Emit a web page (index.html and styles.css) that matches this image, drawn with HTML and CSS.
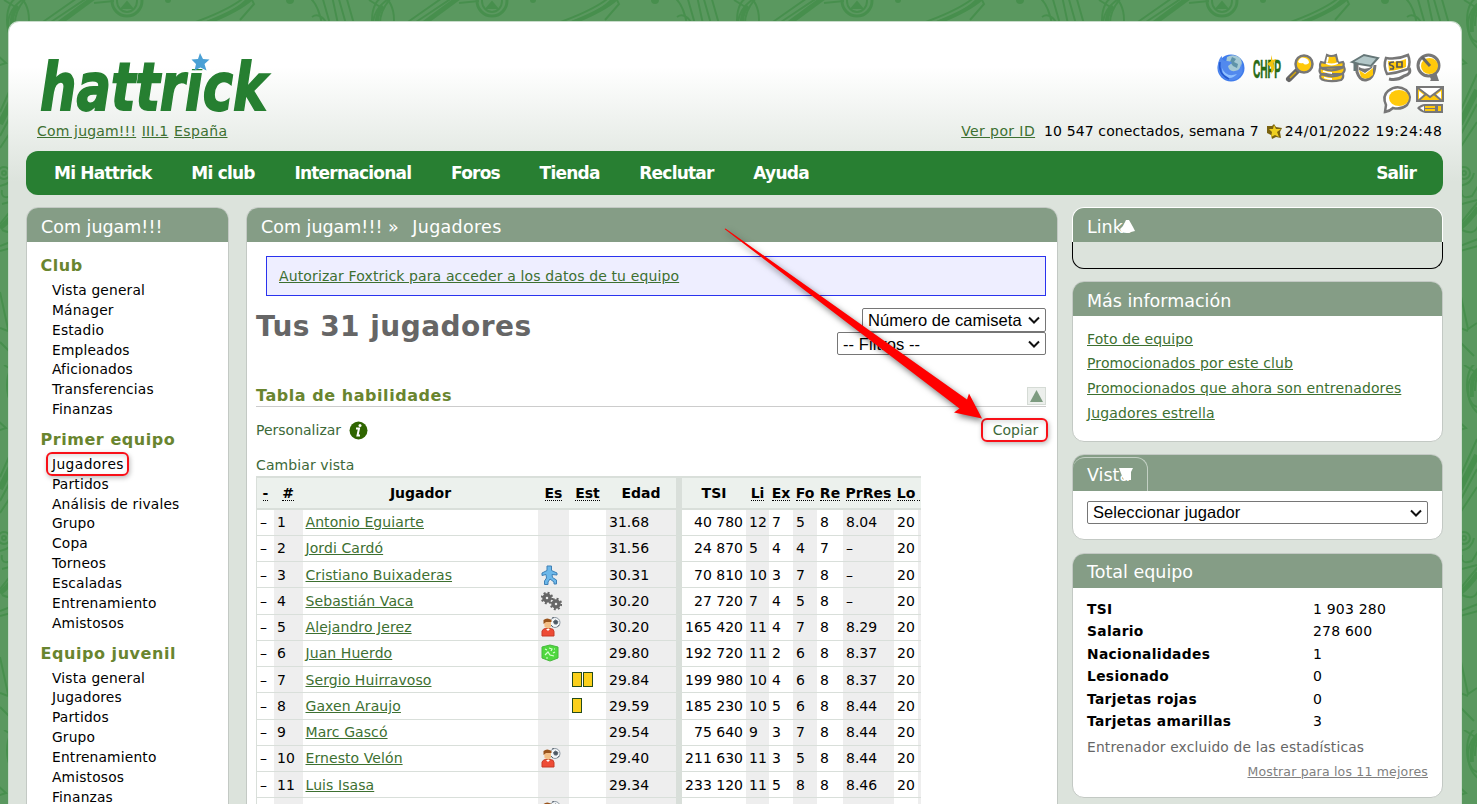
FILE: index.html
```html
<!DOCTYPE html>
<html lang="es">
<head>
<meta charset="utf-8">
<title>Com jugam!!! » Jugadores</title>
<link rel="stylesheet" href="styles.css">
</head>
<body>
<svg class="backdrop" width="1477" height="804" aria-hidden="true">
  <defs>
    <pattern id="doodles" width="365" height="365" patternUnits="userSpaceOnUse">
      <rect width="365" height="365" fill="#5a985f"/>
      <g fill="none" stroke="#478f4d" stroke-width="2">
        <path d="M28-4Q10 6 8 22Q7 40 20 50M28-4Q14 10 15 26M40 24L80-4M48 24L90-4" />
        <path d="M58 24L96-4" stroke-width="5"/>
        <path d="M94 3L114 1"/>
        <ellipse cx="127" cy="1" rx="15" ry="15" stroke-width="3"/>
        <ellipse cx="127" cy="1" rx="10" ry="11"/>
        <path d="M122 8l5-6 5 6z" fill="#478f4d"/>
        <path d="M200 24Q235 14 250-4M190 24Q230 10 246-4M240 20L254 4L250-4M312 17Q319 12 326 22M322-4L330 24M332-4L338 24M338-4L346 24M346-4L354 24M310-2Q318 4 322 24"/>
        <path d="M204 24Q240 10 252-2" stroke-width="4"/>
        <path d="M-4 54L6 63L-3 66M0 112L17 74M0 136L17 104M0 148L17 122"/>
        <path d="M0 124L17 90" stroke-width="6"/>
        <circle cx="4" cy="173" r="6"/><circle cx="4" cy="173" r="2"/>
        <path d="M0 186Q12 184 14 173M2 190Q0 200 12 196L18 186M2 204L17 200M0 224Q8 214 18 202M2 230Q14 236 18 226M0 246L18 239M0 251L18 246M0 292L8 329L17 323M0 328L8 331M17 8L4 0M0 342L14 356"/>
        <path d="M0 228Q10 220 18 208" stroke-width="5"/>
        <ellipse cx="18" cy="20" rx="11" ry="22"/>
        <path d="M18 6Q10 14 12 32" stroke-width="4"/>
      </g>
      <circle cx="168" cy="0" r="3" fill="#478f4d"/>
      <circle cx="290" cy="0" r="4" fill="#478f4d"/>
    </pattern>
  </defs>
  <rect width="1477" height="804" fill="url(#doodles)"/>
</svg>

<div class="page">
  <header class="top">
    <div class="brand">
      <svg class="logo" width="232" height="62" viewBox="0 0 232 62">
        <text class="logo-text" x="2" y="57.500" textLength="227" lengthAdjust="spacingAndGlyphs">hattrick</text>
        <path d="M149 0H178V17H149z" fill="#fff"/>
        <path d="M162 1l3 6 6.500 .5-5 4.500 2 6.500-6-3-6 3 1.500-6.500-4.500-4.500 6.500-.5z" fill="#4aa0d5"/>
      </svg>
      <div class="crumbs"><a href="#">Com jugam!!!</a> <a href="#">III.1</a> <a href="#">España</a></div>
    </div>
    <div class="tools">
      <div class="icons">
        <svg width="28" height="28" viewBox="0 0 28 28"><circle cx="14" cy="14" r="13.500" fill="#3f7cec"/><path d="M10 3Q17-1 23 4Q27 10 23 17Q18 21 12 18Q8 14 9 9z" fill="#a5c9d4"/><path d="M15 3L19 5L17 8L21 10L20 14L16 12L13 8z" fill="#5e93a8"/><path d="M1 10Q2 4 5 2Q4 7 10 7Q14 7 15 9L11 12Q12 18 18 17Q24 16 24 9Q29 18 20 25Q9 29 3 20Q0 15 1 10z" fill="#5289ee"/><path d="M5 14Q9 24 20 20Q14 27 6 22z" fill="#8fc0ff"/><path d="M3 8Q1 20 12 25" fill="none" stroke="#2459d0" stroke-width="1.500"/></svg>
        <svg width="28" height="28" viewBox="0 0 28 28"><text class="chpp" x="0" y="24" textLength="28" lengthAdjust="spacingAndGlyphs">CHPP</text><path d="M18 1l1.500 5 4-1-3 4 1 5-3 6-.5-7-4-3 4-3z" fill="#f2c30d"/></svg>
        <svg width="28" height="28" viewBox="0 0 28 28"><path d="M3 25L11 17" stroke="#666" stroke-width="6" stroke-linecap="round"/><path d="M4 24L10 18" stroke="#d9a90a" stroke-width="1.500"/><circle cx="18" cy="10" r="8.500" fill="#ffc90a" stroke="#777" stroke-width="2.500"/><path d="M12 8Q14 2 19 4Q23 5 23 9Q19 12 17 9Q14 10 12 8z" fill="#fff"/></svg>
        <svg width="28" height="28" viewBox="0 0 28 28"><path d="M3 20Q0 25 7 26.500Q15 28 23 26Q26 24 25 20zM2 14Q0 20 6 21Q16 24 24 20Q28 17 26 13zM3 8Q0 13 5 15Q15 18 24 14Q27 11 25 8L20 9L18 1Q13 3 9 1L7 9z" fill="#ffc90a" stroke="#777" stroke-width="2.200"/><path d="M8 9Q13 12 20 9M10 3l-1 5M5 17Q10 19 14 19M6 23.500Q10 25 14 25" fill="none" stroke="#fff" stroke-width="1.800"/></svg>
        <svg width="28" height="28" viewBox="0 0 28 28"><path d="M6 10V18Q9 27 15 26Q23 25 24 11" fill="#fff" stroke="#777" stroke-width="3"/><path d="M1 8L13 1L27 4L20 12L8 10z" fill="#b3c8c9" stroke="#667778" stroke-width="2"/><path d="M4 9V17" stroke="#667778" stroke-width="3"/><path d="M8 13Q14 17 22 12L21 14L14 19L8 16z" fill="#777"/><path d="M8 16L14 20L22 14V21Q16 27 10 23z" fill="#ffc90a"/></svg>
        <svg width="28" height="28" viewBox="0 0 28 28"><path d="M3 4Q14 6 25 1Q28 8 25 15Q14 19 4 20Q0 12 3 4z" fill="#fff" stroke="#777" stroke-width="2.500"/><path d="M5 7Q14 9 23 5V13Q16 16 6 17z" fill="#ffc90a"/><path d="M11 8Q5 8 7 11Q12 12 10 15H7M19 8h-5v5h5V9z" fill="none" stroke="#555" stroke-width="1.700"/><path d="M26 14Q29 20 21 22Q14 27 6 25" fill="none" stroke="#777" stroke-width="3"/></svg>
        <svg width="28" height="28" viewBox="0 0 28 28"><path d="M20 18L23 27H14Q16 25 13 22z" fill="#777"/><circle cx="12.500" cy="11.500" r="10.500" fill="#fff" stroke="#777" stroke-width="3"/><ellipse cx="13.500" cy="12" rx="8.500" ry="8" fill="#ffc90a"/><path d="M6 3L14 12" stroke="#666" stroke-width="3"/></svg>
        <svg width="28" height="28" viewBox="0 0 28 28"><path d="M2 26L3 19Q-1 10 5 5Q14-2 23 4Q30 11 24 19Q18 24 10 22Q7 25 2 26z" fill="#fff" stroke="#777" stroke-width="2.500"/><ellipse cx="16" cy="12" rx="10" ry="8" fill="#ffc90a"/></svg>
        <svg width="28" height="28" viewBox="0 0 28 28"><rect x="1" y="1" width="26" height="14" fill="#ffc90a" stroke="#777" stroke-width="2"/><path d="M3 2l11 9L25 2zM8 9L3 14V5zM20 9l5 5V5z" fill="#fff"/><path d="M2 2l12 9L26 2M2 15l8-7M26 15l-8-7" fill="none" stroke="#777" stroke-width="2"/><path d="M1 22Q5 18 9 18H27V27H9Q4 26 1 22z" fill="#777"/><path d="M9 20h10v2H9zM9 23h10v2H9zM22 20h3v5h-3z" fill="#ffc90a"/><path d="M4 22l4-2v5z" fill="#fff"/></svg>
      </div>
      <div class="status"><a href="#">Ver por ID</a><span class="online">10 547 conectados, semana 7</span><svg width="17" height="16" viewBox="0 0 17 16"><path d="M1 3h5l2-2 2 3 6 1-2 4 1 6-5-1-4 2-1-4-4-2z" fill="#796210"/><path d="M8 2l2 4h5l-4 3 2 5-4-2-4 2 1-5-3-3h4z" fill="#f0d020"/></svg><span class="clock">24/01/2022 19:24:48</span></div>
    </div>
  </header>

  <nav class="menu">
    <a>Mi Hattrick</a><a>Mi club</a><a>Internacional</a><a>Foros</a><a>Tienda</a><a>Reclutar</a><a>Ayuda</a><a class="exit">Salir</a>
  </nav>

  <div class="columns">
    <aside class="box side">
      <h2 class="box-head">Com jugam!!!</h2>
      <div class="side-body">
        <h3>Club</h3>
        <ul><li>Vista general</li><li>Mánager</li><li>Estadio</li><li>Empleados</li><li>Aficionados</li><li>Transferencias</li><li>Finanzas</li></ul>
        <h3>Primer equipo</h3>
        <ul><li class="current"><span class="marked">Jugadores</span></li><li>Partidos</li><li>Análisis de rivales</li><li>Grupo</li><li>Copa</li><li>Torneos</li><li>Escaladas</li><li>Entrenamiento</li><li>Amistosos</li></ul>
        <h3>Equipo juvenil</h3>
        <ul><li>Vista general</li><li>Jugadores</li><li>Partidos</li><li>Grupo</li><li>Entrenamiento</li><li>Amistosos</li><li>Finanzas</li></ul>
      </div>
    </aside>

    <main class="box main">
      <h2 class="box-head">Com jugam!!! »&nbsp; <span class="here">Jugadores</span></h2>
      <div class="main-body">
        <div class="notice"><a href="#">Autorizar Foxtrick para acceder a los datos de tu equipo</a></div>
        <div class="title-row">
          <h1>Tus 31 jugadores</h1>
          <div class="filters">
            <div class="select order">Número de camiseta<svg width="12" height="8" viewBox="0 0 12 8"><path d="M1 1.500L6 6.500l5-5"/></svg></div>
            <div class="select filter">-- Filtros --<svg width="12" height="8" viewBox="0 0 12 8"><path d="M1 1.500L6 6.500l5-5"/></svg></div>
          </div>
        </div>
        <div class="section"><h3>Tabla de habilidades</h3><span class="collapse"><svg width="13" height="12" viewBox="0 0 13 12"><path d="M6.500 0L13 12H0z" fill="#7d9b80"/></svg></span></div>
        <div class="customize"><span>Personalizar</span><svg width="19" height="19" viewBox="0 0 19 19"><circle cx="9.500" cy="9.500" r="9" fill="#2f6500"/><circle cx="11" cy="4.500" r="1.500" fill="#fff"/><path d="M7 7.500h3L8.500 14.500H11" fill="none" stroke="#fff" stroke-width="2"/></svg><span class="copy">Copiar</span></div>
        <div class="view">Cambiar vista</div>

        <div class="skills">
          <div class="r head"><b><u>-</u></b><b><u>#</u></b><b>Jugador</b><b><u>Es</u></b><b><u>Est</u></b><b>Edad</b><b></b><b>TSI</b><b><u>Li</u></b><b><u>Ex</u></b><b><u>Fo</u></b><b><u>Re</u></b><b><u>PrRes</u></b><b><u>Lo</u></b><b><u>&nbsp;</u></b></div>
          <div class="r"><i>–</i><i>1</i><i><a>Antonio Eguiarte</a></i><i></i><i></i><i>31.68</i><i></i><i>40 780</i><i>12</i><i>7</i><i>5</i><i>8</i><i>8.04</i><i>20</i><i></i></div>
          <div class="r"><i>–</i><i>2</i><i><a>Jordi Cardó</a></i><i></i><i></i><i>31.56</i><i></i><i>24 870</i><i>5</i><i>4</i><i>4</i><i>7</i><i>–</i><i>20</i><i></i></div>
          <div class="r"><i>–</i><i>3</i><i><a>Cristiano Buixaderas</a></i><i><svg width="17" height="20" viewBox="0 0 17 20"><path d="M6 1h4.500v4.500L16 8v2l-5-.5.500 3 4 2.500v4h-2.500v-2L9 14l-2 3v2.500H3.500V16l2-3L5 9.500 1 10.500V8l5-2.500z" fill="#6cb8ea" stroke="#3f80b5"/></svg></i><i></i><i>30.31</i><i></i><i>70 810</i><i>10</i><i>3</i><i>7</i><i>8</i><i>–</i><i>20</i><i></i></div>
          <div class="r"><i>–</i><i>4</i><i><a>Sebastián Vaca</a></i><i><svg width="21" height="20" viewBox="0 0 21 20"><g fill="none" stroke="#666"><circle cx="6" cy="7" r="3" stroke-width="3.500"/><circle cx="6" cy="7" r="5.200" stroke-width="2" stroke-dasharray="2 2.080"/><circle cx="15" cy="13" r="3" stroke-width="3.500"/><circle cx="15" cy="13" r="5.200" stroke-width="2" stroke-dasharray="2 2.080"/></g></svg></i><i></i><i>30.20</i><i></i><i>27 720</i><i>7</i><i>4</i><i>5</i><i>8</i><i>–</i><i>20</i><i></i></div>
          <div class="r"><i>–</i><i>5</i><i><a>Alejandro Jerez</a></i><i><svg width="20" height="20" viewBox="0 0 20 20"><g id="trainer"><circle cx="14" cy="5.500" r="5" fill="#f3f6f8" stroke="#8e99a3"/><path d="M12.500 4.500l2-1.500 2.500 1.500-1 2.500h-2.500zM18.500 8l-2 1.500M11 1l2-.5M10 8l2 2" fill="#4c5761" stroke="#5d6872"/><path d="M1 19v-5q1-3 5-2.500h3q4 0 4 3V19z" fill="#ee4b35" stroke="#c63b27"/><path d="M3 3h7v7l-2.500 2-4-2z" fill="#f3bf86"/><path d="M2.500 7V3q3.500-3 8 0v2H5z" fill="#9a541c"/><path d="M5 12l2 2 2-2" fill="#fff"/></g></svg></i><i></i><i>30.20</i><i></i><i>165 420</i><i>11</i><i>4</i><i>7</i><i>8</i><i>8.29</i><i>20</i><i></i></div>
          <div class="r"><i>–</i><i>6</i><i><a>Juan Huerdo</a></i><i><svg width="18" height="18" viewBox="0 0 18 18"><path d="M9 1l8 2v11l-8 3-8-3V3z" fill="#4fd83e" stroke="#46b83d"/><path d="M4 5l2 1M8 4l3 1-1 2M13 5h1M4 11l3-3 2 3 4 1M12 9l2-1M5 14h2" fill="none" stroke="#d9ffd3" stroke-width="1.200"/></svg></i><i></i><i>29.80</i><i></i><i>192 720</i><i>11</i><i>2</i><i>6</i><i>8</i><i>8.37</i><i>20</i><i></i></div>
          <div class="r"><i>–</i><i>7</i><i><a>Sergio Huirravoso</a></i><i></i><i><span class="card"></span><span class="card"></span></i><i>29.84</i><i></i><i>199 980</i><i>10</i><i>4</i><i>6</i><i>8</i><i>8.37</i><i>20</i><i></i></div>
          <div class="r"><i>–</i><i>8</i><i><a>Gaxen Araujo</a></i><i></i><i><span class="card"></span></i><i>29.59</i><i></i><i>185 230</i><i>10</i><i>5</i><i>6</i><i>8</i><i>8.44</i><i>20</i><i></i></div>
          <div class="r"><i>–</i><i>9</i><i><a>Marc Gascó</a></i><i></i><i></i><i>29.54</i><i></i><i>75 640</i><i>9</i><i>3</i><i>7</i><i>8</i><i>8.44</i><i>20</i><i></i></div>
          <div class="r"><i>–</i><i>10</i><i><a>Ernesto Velón</a></i><i><svg width="20" height="20" viewBox="0 0 20 20"><use href="#trainer"/></svg></i><i></i><i>29.40</i><i></i><i>211 630</i><i>11</i><i>3</i><i>5</i><i>8</i><i>8.44</i><i>20</i><i></i></div>
          <div class="r"><i>–</i><i>11</i><i><a>Luis Isasa</a></i><i></i><i></i><i>29.34</i><i></i><i>233 120</i><i>11</i><i>5</i><i>8</i><i>8</i><i>8.46</i><i>20</i><i></i></div>
          <div class="r"><i></i><i></i><i></i><i><svg width="20" height="20" viewBox="0 0 20 20"><use href="#trainer"/></svg></i><i></i><i></i><i></i><i></i><i></i><i></i><i></i><i></i><i></i><i></i><i></i></div>
        </div>
      </div>
    </main>

    <aside class="right">
      <section class="links">
        <h2 class="box-head">Links<svg class="mark" width="17" height="14" viewBox="0 0 17 14"><path d="M7 0L10 0L14 7L16 11L12 12L10 13L6 12L3 13L1 9L4 6z" fill="#fff"/></svg></h2>
        <div class="links-body"></div>
      </section>
      <section class="box info">
        <h2 class="box-head">Más información</h2>
        <ul><li><a href="#">Foto de equipo</a></li><li><a href="#">Promocionados por este club</a></li><li><a href="#">Promocionados que ahora son entrenadores</a></li><li><a href="#">Jugadores estrella</a></li></ul>
      </section>
      <section class="box vista">
        <div class="tabs"><h2 class="tab">Vista<svg class="mark" width="14" height="13" viewBox="0 0 14 13"><path d="M0 0H14L12 4V12H5L3 8z" fill="#fff"/></svg></h2></div>
        <div class="select player">Seleccionar jugador<svg width="12" height="8" viewBox="0 0 12 8"><path d="M1 1.500L6 6.500l5-5"/></svg></div>
      </section>
      <section class="box total">
        <h2 class="box-head">Total equipo</h2>
        <dl><dt>TSI</dt><dd>1 903 280</dd><dt>Salario</dt><dd>278 600</dd><dt>Nacionalidades</dt><dd>1</dd><dt>Lesionado</dt><dd>0</dd><dt>Tarjetas rojas</dt><dd>0</dd><dt>Tarjetas amarillas</dt><dd>3</dd></dl>
        <p>Entrenador excluido de las estadísticas</p>
        <a class="best" href="#">Mostrar para los 11 mejores</a>
      </section>
    </aside>
  </div>
</div>

<svg class="arrow" width="280" height="210" viewBox="720 220 280 210" aria-hidden="true"><path d="M724.500 229L725.500 228.500L967 399.500L969 393.500L982 418.500L954 412.500L959.500 408.500Z" fill="#f00"/></svg>
</body>
</html>
```
FILE: styles.css
```css
* { box-sizing: border-box; }
body {
  margin: 0;
  height: 804px;
  overflow: hidden;
  position: relative;
  background: #5a985f;
  font: 14px/20px Verdana, "DejaVu Sans", sans-serif;
  color: #000;
}
h1, h2, h3, ul, dl, dd, p { margin: 0; padding: 0; }
ul { list-style: none; }
a { color: #3d7031; }
svg { display: block; flex: none; }

.backdrop { position: absolute; left: 0; top: 0; z-index: -1; }
.page {
  margin: 21px 15px 0 8px;
  height: 800px;
  padding: 0 18px 0 17px;
  border: 1px solid #c9dccb;
  border-bottom: 0;
  border-radius: 11px 11px 0 0;
  background: linear-gradient(#fff 0, #fff 45px, #dce3dc 160px);
}

.top { height: 129px; display: flex; justify-content: space-between; }
.brand { padding: 30px 0 0 11px; }
.logo { margin-left: 1px; overflow: visible; }
.logo-text {
  font: italic bold 65px/1 "DejaVu Sans", sans-serif;
  fill: #267f31;
  stroke: #267f31;
  stroke-width: 1.8;
}
.crumbs { margin-top: 7px; white-space: nowrap; letter-spacing: .17px; }
.crumbs a + a { margin-left: 1px; }
.crumbs a:last-child { letter-spacing: .4px; }
.tools { width: 500px; padding-top: 32px; }
.icons {
  display: flex;
  flex-wrap: wrap;
  justify-content: flex-end;
  gap: 4px 4.600px;
  width: 239px;
  margin: 0 -1px 0 auto;
}
.icons svg { overflow: visible; }
.icons svg:first-child { margin-right: 3px; }
.chpp { font: bold 26px/1 "Liberation Sans", sans-serif; fill: #286b16; stroke: #286b16; stroke-width: .6; }
.status {
  display: flex;
  justify-content: flex-end;
  align-items: center;
  margin-top: 7px;
  padding-right: 1px;
  height: 20px;
  white-space: nowrap;
}
.status a { letter-spacing: .4px; }
.online { margin: 0 7px 0 9px; letter-spacing: .12px; }
.clock { margin-left: 2px; letter-spacing: .5px; margin-right: -.4px; }

.menu {
  height: 44px;
  display: flex;
  align-items: center;
  gap: 39.700px;
  padding: 0 27px 1px 28px;
  border-radius: 12px;
  background: #287f32;
  font-weight: bold;
  font-size: 17px;
  letter-spacing: -.780px;
}
.menu a { color: #fff; white-space: nowrap; }
.menu .exit { margin-left: auto; }

.columns { display: flex; align-items: flex-start; margin-top: 12px; }
.box {
  border: 1px solid #c3c9c4;
  border-radius: 12px;
  background: #fff;
  overflow: hidden;
}
.box-head, .tab {
  position: relative;
  height: 34px;
  line-height: 38px;
  padding-left: 14px;
  background: #859d86;
  color: #fff;
  font-size: 17.500px;
  font-weight: normal;
  white-space: nowrap;
}
.here { letter-spacing: .3px; margin-left: 2.500px; }
.side { width: 203px; height: 620px; margin-right: 17px; }
.side-body { padding: 13px 0 0 13.500px; }
.side h3, .section h3 { font-size: 16px; line-height: 22px; color: #69852f; letter-spacing: .550px; white-space: nowrap; }
.side h3 { margin-bottom: 3px; }
.side ul { padding-left: 11.500px; margin-bottom: 10px; }
.side li { height: 19.850px; line-height: 20px; font-size: 13.800px; white-space: nowrap; letter-spacing: .170px; }
.current { display: flex; align-items: flex-start; }
.marked {
  width: 83px;
  margin: -2px 0 0 -6px;
  padding-left: 4px;
  height: 24px;
  line-height: 20px;
  letter-spacing: .4px;
  border: 2px solid #f81018;
  border-radius: 6px;
  box-shadow: 1px 2px 5px #0004, inset 1px 2px 5px #0002;
}

.main { width: 812px; height: 620px; margin-right: 14px; }
.main-body { padding: 14px 11px 0 9px; color: #3d6939; }
.notice {
  height: 40px;
  margin-left: 10px;
  padding-left: 12px;
  border: 1px solid #2a33ee;
  background: #eef;
  line-height: 38px;
  letter-spacing: .125px;
}
.title-row { display: flex; justify-content: space-between; padding-top: 12px; height: 72px; }
h1 { font-size: 28px; line-height: 38px; color: #666; letter-spacing: .450px; }
.filters { display: flex; flex-direction: column; align-items: flex-end; }
.select {
  display: flex;
  align-items: center;
  justify-content: space-between;
  height: 23px;
  padding: 0 5px;
  border: 1px solid #767676;
  border-radius: 2px;
  background: #fff;
  color: #000;
  font: 16.500px/21px "Liberation Sans", Arial, sans-serif;
  letter-spacing: .080px;
  white-space: nowrap;
}
.select path { fill: none; stroke: #111; stroke-width: 2; }
.order { width: 184px; height: 24px; }
.filter { width: 209px; line-height: 20px; }
.section {
  display: flex;
  justify-content: space-between;
  align-items: flex-end;
  height: 39px;
  border-bottom: 1px solid #ccc;
}
.section h3 { line-height: 20px; }
.collapse { padding: 2px; border: 1px solid #d5dbd5; background: #ecefec; width: 19px; height: 18px; margin-bottom: 1px; }
.customize { display: flex; align-items: center; height: 24px; margin-top: 11px; gap: 8px; }
.copy {
  margin-left: auto;
  margin-right: -2px;
  width: 67px;
  height: 24px;
  line-height: 21px;
  padding-left: 2px;
  text-align: center;
  border: 2px solid #f81018;
  border-radius: 6px;
  box-shadow: 1px 2px 5px #0004, inset 1px 2px 5px #0002;
}
.view { margin-top: 13px; height: 21px; letter-spacing: .1px; }

.skills { width: 665px; height: 340px; overflow: hidden; border-left: 1px solid #d9dfda; color: #000; }
.r {
  display: grid;
  grid-template-columns: 17px 29px 235px 31px 37px 70px 6px 64px 23px 24px 24px 26px 51px 24px 3px;
  height: 26.250px;
}
.r > i {
  display: flex;
  align-items: center;
  font-style: normal;
  padding-left: 3px;
  border-bottom: 1px solid #d9dfda;
  white-space: nowrap;
}
.r > i:nth-child(3) { padding-left: 2.500px; letter-spacing: .080px; }
.r > i:nth-child(2), .r > i:nth-child(4), .r > i:nth-child(6), .r > i:nth-child(9),
.r > i:nth-child(11), .r > i:nth-child(13), .r > i:nth-child(15) { background: #eee; }
.r > i:nth-child(8) { justify-content: flex-end; padding-right: 3px; }
.r > :nth-child(7) { background: #d9dfda; }
.r a { text-decoration: underline; }
.head { height: 34px; margin-bottom: -.400px; border-top: 2px solid #d9dfda; border-bottom: 2px solid #d9dfda; background: #ecf1ed; }
.head b { display: flex; align-items: center; justify-content: center; font-size: 14px; overflow: visible; min-width: 0; }
.head b:nth-child(2) { padding-right: 1px; }
.head u { text-decoration: none; border-bottom: 1px dotted #000; line-height: 14px; }
.card { width: 10px; height: 15px; border: 1px solid #244b1c; background: #fbd01b; margin-right: 1px; }

.right { width: 371px; }
.right .box { margin-bottom: 12px; }
.links { margin-bottom: 12px; }
.links .box-head { height: 35px; border: 1px solid #fff; border-bottom: 0; border-radius: 12px 12px 0 0; }
.links-body { height: 27px; border: 1px solid #000; border-top: 0; border-radius: 0 0 12px 12px; }
.links .mark { position: absolute; left: 46px; top: 12px; }
.info { height: 161px; }
.info ul { padding: 10.500px 14px; letter-spacing: .125px; }
.info li { height: 24.700px; line-height: 25px; }
.vista { height: 86px; }
.right .vista { margin-bottom: 13px; }
.tabs { height: 36px; padding-top: 2px; background: #859d86; }
.tab { width: 75px; border: solid #c3d0c4; border-width: 1px 1px 0 0; border-radius: 12px 12px 0 0; padding-left: 14px; line-height: 34px; }
.vista .mark { position: absolute; left: 46px; top: 10px; }
.player { width: 341px; margin: 10px 0 0 14px; }
.total { height: 245px; }
.total .box-head { line-height: 36px; }
dl { display: grid; grid-template-columns: 226px 1fr; grid-auto-rows: 22.400px; padding: 10px 14px 0; line-height: 23px; }
dt { font-weight: bold; font-size: 13.800px; letter-spacing: .340px; }
dd { letter-spacing: .2px; }
.total p { padding: 4px 14px 0; color: #666; line-height: 22px; font-size: 13.800px; letter-spacing: .180px; }
.best { display: block; margin: 4px 14px 0 0; text-align: right; font-size: 12.500px; letter-spacing: .180px; color: #808080; }

.arrow { position: absolute; left: 720px; top: 220px; filter: drop-shadow(2px 3px 3px #0008); }
```
